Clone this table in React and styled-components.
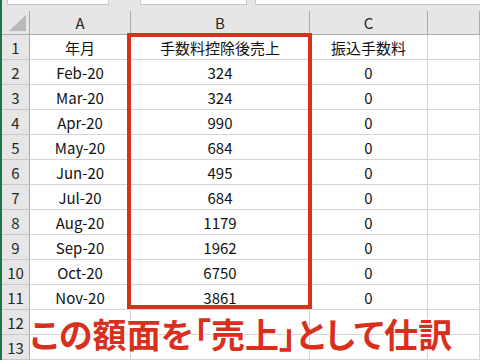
import React from 'react';
import { createGlobalStyle, styled } from 'styled-components';

const months = [
  ['Feb-20', 324],
  ['Mar-20', 324],
  ['Apr-20', 990],
  ['May-20', 684],
  ['Jun-20', 495],
  ['Jul-20', 684],
  ['Aug-20', 1179],
  ['Sep-20', 1962],
  ['Oct-20', 6750],
  ['Nov-20', 3861],
];

function App() {
  return (
    <>
      <GlobalStyle />
      <Screen>
        <GreenEdge />
        <Workbook>
          <FormulaStrip>
            <NameBox $width={100} $margin={5} />
            <NameBox $width={105} $margin={31} />
            <NameBox $margin={8} $grow />
          </FormulaStrip>
          <Sheet>
            <Corner>
              <CornerTriangle />
            </Corner>
            <ColHead>A</ColHead>
            <ColHead>B</ColHead>
            <ColHead>C</ColHead>
            <ColHead />

            <RowHead>1</RowHead>
            <Cell>年月</Cell>
            <Cell>手数料控除後売上</Cell>
            <Cell>振込手数料</Cell>
            <Cell />

            {months.map(([month, amount], i) => (
              <React.Fragment key={month}>
                <RowHead>{i + 2}</RowHead>
                <Cell>{month}</Cell>
                <Cell>{amount}</Cell>
                <Cell>0</Cell>
                <Cell />
              </React.Fragment>
            ))}

            {[12, 13].map(n => (
              <React.Fragment key={n}>
                <RowHead>{n}</RowHead>
                <Cell />
                <Cell />
                <Cell />
                <Cell />
              </React.Fragment>
            ))}

            <Highlight />
            <Caption>この額面を「売上」として仕訳</Caption>
          </Sheet>
        </Workbook>
      </Screen>
    </>
  );
}

export default App;

const GlobalStyle = createGlobalStyle`
  html, body {
    margin: 0;
    padding: 0;
    background: #ffffff;
    overflow: hidden;
  }
`;

const Screen = styled.div`
  display: flex;
  width: 480px;
  height: 360px;
  overflow: hidden;
  font-family: 'Noto Sans CJK JP', 'Noto Sans', sans-serif;
`;

const GreenEdge = styled.div`
  width: 2px;
  flex-shrink: 0;
  background: #217346;
`;

const Workbook = styled.div`
  flex: 1;
  display: flex;
  flex-direction: column;
  background: #e6e6e6;
`;

const FormulaStrip = styled.div`
  display: flex;
  height: 15px;
  align-items: flex-start;
`;

const NameBox = styled.div`
  height: 4px;
  width: ${p => (p.$width ? `${p.$width}px` : 'auto')};
  flex: ${p => (p.$grow ? 1 : 'none')};
  margin-left: ${p => p.$margin}px;
  background: #ffffff;
  border: 1px solid #c6c6c6;
  border-top: none;
  ${p => p.$grow && 'border-right: none;'}
`;

const Sheet = styled.div`
  position: relative;
  display: grid;
  grid-template-columns: 28px 101px 179px 118px 1fr;
  grid-template-rows: 24px repeat(13, 25px);
  background: #ffffff;
`;

const Corner = styled.div`
  position: relative;
  background: #e6e6e6;
  border-right: 1px solid #ababab;
  border-bottom: 1px solid #ababab;
`;

const CornerTriangle = styled.div`
  position: absolute;
  left: 7px;
  top: 4px;
  width: 17px;
  height: 16px;
  background: #b9b9b9;
  clip-path: polygon(100% 0, 100% 100%, 0 100%);
`;

const ColHead = styled.div`
  display: flex;
  align-items: center;
  justify-content: center;
  background: #e6e6e6;
  border-right: 1px solid #ababab;
  border-bottom: 1px solid #ababab;
  color: #262626;
  font-size: 15px;
`;

const RowHead = styled.div`
  display: flex;
  align-items: center;
  justify-content: center;
  background: #e6e6e6;
  border-right: 1px solid #ababab;
  border-bottom: 1px solid #c8c8c8;
  color: #262626;
  font-size: 15px;
`;

const Cell = styled.div`
  display: flex;
  align-items: center;
  justify-content: center;
  border-right: 1px solid #d4d4d4;
  border-bottom: 1px solid #d4d4d4;
  color: #111111;
  font-size: 15px;
  white-space: nowrap;
`;

const Highlight = styled.div`
  position: absolute;
  left: 125px;
  top: 22px;
  width: 177px;
  height: 268px;
  border: 4px solid #d9301e;
  pointer-events: none;
`;

const Caption = styled.div`
  position: absolute;
  left: 28px;
  top: 306px;
  color: #d9301e;
  font-size: 34px;
  font-weight: 700;
  line-height: 1;
  letter-spacing: 0.2px;
  font-feature-settings: 'palt';
  white-space: nowrap;
  text-shadow:
    -1px 0 #ffffff, 1px 0 #ffffff, 0 -1px #ffffff, 0 1px #ffffff;
`;
